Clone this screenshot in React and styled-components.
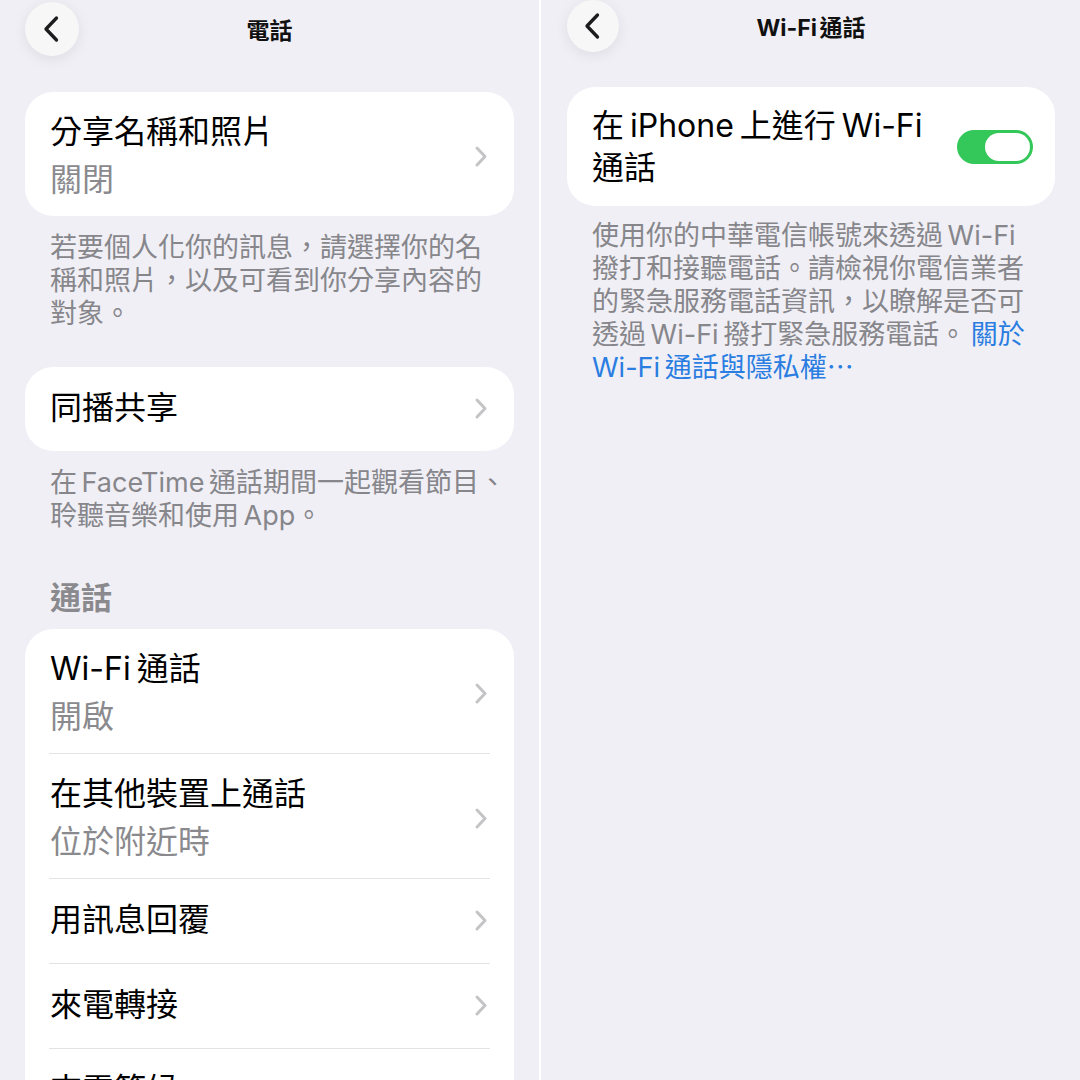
import React from "react";
import styled, { createGlobalStyle } from "styled-components";

const GlobalStyle = createGlobalStyle`
  html, body {
    margin: 0;
    padding: 0;
    background: #ffffff;
  }
  body {
    font-family: Inter, "Noto Sans CJK TC", sans-serif;
    -webkit-font-smoothing: antialiased;
  }
`;

function BackIcon() {
  return (
    <svg width="20" height="28" viewBox="0 0 20 28" fill="none">
      <path
        d="M15.5 3 L5 14 L15.5 25"
        stroke="#1c1c1e"
        strokeWidth="3.3"
        strokeLinecap="round"
        strokeLinejoin="round"
      />
    </svg>
  );
}

function Chevron() {
  return (
    <svg width="14" height="23" viewBox="0 0 14 23" fill="none">
      <path
        d="M3 3 L11 11.5 L3 20"
        stroke="#c4c4c7"
        strokeWidth="3"
        strokeLinecap="round"
        strokeLinejoin="round"
      />
    </svg>
  );
}

function NavBar({ title, size, top }) {
  return (
    <Nav $size={size} $top={top}>
      <BackButton $size={size}>
        <BackIcon />
      </BackButton>
      <NavTitle>{title}</NavTitle>
      <span />
    </Nav>
  );
}

function LinkRow({ title, sub, first }) {
  return (
    <Row $first={first} $single={!sub}>
      <RowText>
        <RowTitle>{title}</RowTitle>
        {sub && <RowSub>{sub}</RowSub>}
      </RowText>
      <Chevron />
    </Row>
  );
}

const callRows = [
  { title: "Wi-Fi 通話", sub: "開啟" },
  { title: "在其他裝置上通話", sub: "位於附近時" },
  { title: "用訊息回覆" },
  { title: "來電轉接" },
  { title: "來電等候" },
];

export default function App() {
  return (
    <>
      <GlobalStyle />
      <Screen>
        <Panel $left={25}>
          <NavBar title="電話" size={54} top={2} />

          <Card $top={36}>
            <LinkRow title="分享名稱和照片" sub="關閉" first />
          </Card>
          <Footer>
            若要個人化你的訊息，請選擇你的名
            <br />
            稱和照片，以及可看到你分享內容的
            <br />
            對象。
          </Footer>

          <Card $top={37}>
            <LinkRow title="同播共享" first />
          </Card>
          <Footer>
            在 FaceTime 通話期間一起觀看節目、
            <br />
            聆聽音樂和使用 App。
          </Footer>

          <SectionHeader>通話</SectionHeader>
          <Card $top={0}>
            {callRows.map((r, i) => (
              <LinkRow key={r.title} title={r.title} sub={r.sub} first={i === 0} />
            ))}
          </Card>
        </Panel>

        <Panel $left={26}>
          <NavBar title="Wi-Fi 通話" size={52} top={0} />

          <ToggleCard>
            <ToggleLabel>
              在 iPhone 上進行 Wi-Fi
              <br />
              通話
            </ToggleLabel>
            <Toggle $on>
              <Knob />
            </Toggle>
          </ToggleCard>
          <Footer $top={13}>
            使用你的中華電信帳號來透過 Wi-Fi
            <br />
            撥打和接聽電話。請檢視你電信業者
            <br />
            的緊急服務電話資訊，以瞭解是否可
            <br />
            透過 Wi-Fi 撥打緊急服務電話。{" "}
            <Link>
              關於
              <br />
              Wi-Fi 通話與隱私權⋯
            </Link>
          </Footer>
        </Panel>
      </Screen>
    </>
  );
}

const Screen = styled.div`
  display: flex;
  gap: 2px;
  width: 1080px;
  height: 1080px;
  overflow: hidden;
  background: #ffffff;
`;

const Panel = styled.div`
  flex: 0 0 539px;
  height: 1080px;
  overflow: hidden;
  box-sizing: border-box;
  padding: 0 25px 0 ${(p) => p.$left}px;
  background: #f0eff5;
`;

const Nav = styled.div`
  display: grid;
  grid-template-columns: ${(p) => p.$size}px 1fr ${(p) => p.$size}px;
  align-items: center;
  height: ${(p) => p.$size}px;
  margin-top: ${(p) => p.$top}px;
`;

const BackButton = styled.div`
  display: flex;
  align-items: center;
  justify-content: center;
  width: ${(p) => p.$size}px;
  height: ${(p) => p.$size}px;
  border-radius: 50%;
  background: #f7f7f8;
  box-shadow: 0 3px 14px rgba(0, 0, 0, 0.08);

  svg {
    margin-left: -3px;
  }
`;

const NavTitle = styled.div`
  text-align: center;
  font-size: 23px;
  font-weight: 700;
  color: #111111;
  word-spacing: -3px;
`;

const Card = styled.div`
  margin-top: ${(p) => p.$top}px;
  background: #ffffff;
  border-radius: 28px;
`;

const Row = styled.div`
  display: flex;
  align-items: center;
  justify-content: space-between;
  margin: 0 24px;
  padding: ${(p) => (p.$single ? "19px 2px 21px 1px" : "18px 2px 14px 1px")};
  border-top: ${(p) => (p.$first ? "none" : "1px solid #e3e3e6")};
`;

const RowText = styled.div`
  display: flex;
  flex-direction: column;
  gap: 4px;
`;

const RowTitle = styled.div`
  font-size: 32px;
  line-height: 44px;
  color: #000000;
  word-spacing: -3px;
`;

const RowSub = styled.div`
  font-size: 32px;
  line-height: 44px;
  color: #8a8a8e;
`;

const Footer = styled.div`
  margin-top: ${(p) => p.$top ?? 15}px;
  padding: 0 25px;
  font-size: 27px;
  line-height: 33px;
  color: #86868b;
  white-space: nowrap;
  word-spacing: -3px;
`;

const Link = styled.span`
  color: #2a7de1;
`;

const SectionHeader = styled.div`
  margin-top: 46px;
  margin-bottom: 11px;
  padding: 0 25px;
  font-size: 31px;
  font-weight: 600;
  line-height: 40px;
  color: #8a8a8e;
`;

const ToggleCard = styled.div`
  display: flex;
  align-items: center;
  justify-content: space-between;
  margin-top: 35px;
  padding: 18px 22px 17px 25px;
  background: #ffffff;
  border-radius: 28px;
`;

const ToggleLabel = styled.div`
  font-size: 32px;
  line-height: 42px;
  color: #000000;
  word-spacing: -3px;
`;

const Toggle = styled.div`
  display: flex;
  justify-content: ${(p) => (p.$on ? "flex-end" : "flex-start")};
  align-items: center;
  box-sizing: border-box;
  width: 76px;
  height: 34px;
  padding: 3px;
  border-radius: 17px;
  background: ${(p) => (p.$on ? "#34c759" : "#e5e5ea")};
`;

const Knob = styled.div`
  width: 45px;
  height: 28px;
  border-radius: 14px;
  background: #ffffff;
`;
